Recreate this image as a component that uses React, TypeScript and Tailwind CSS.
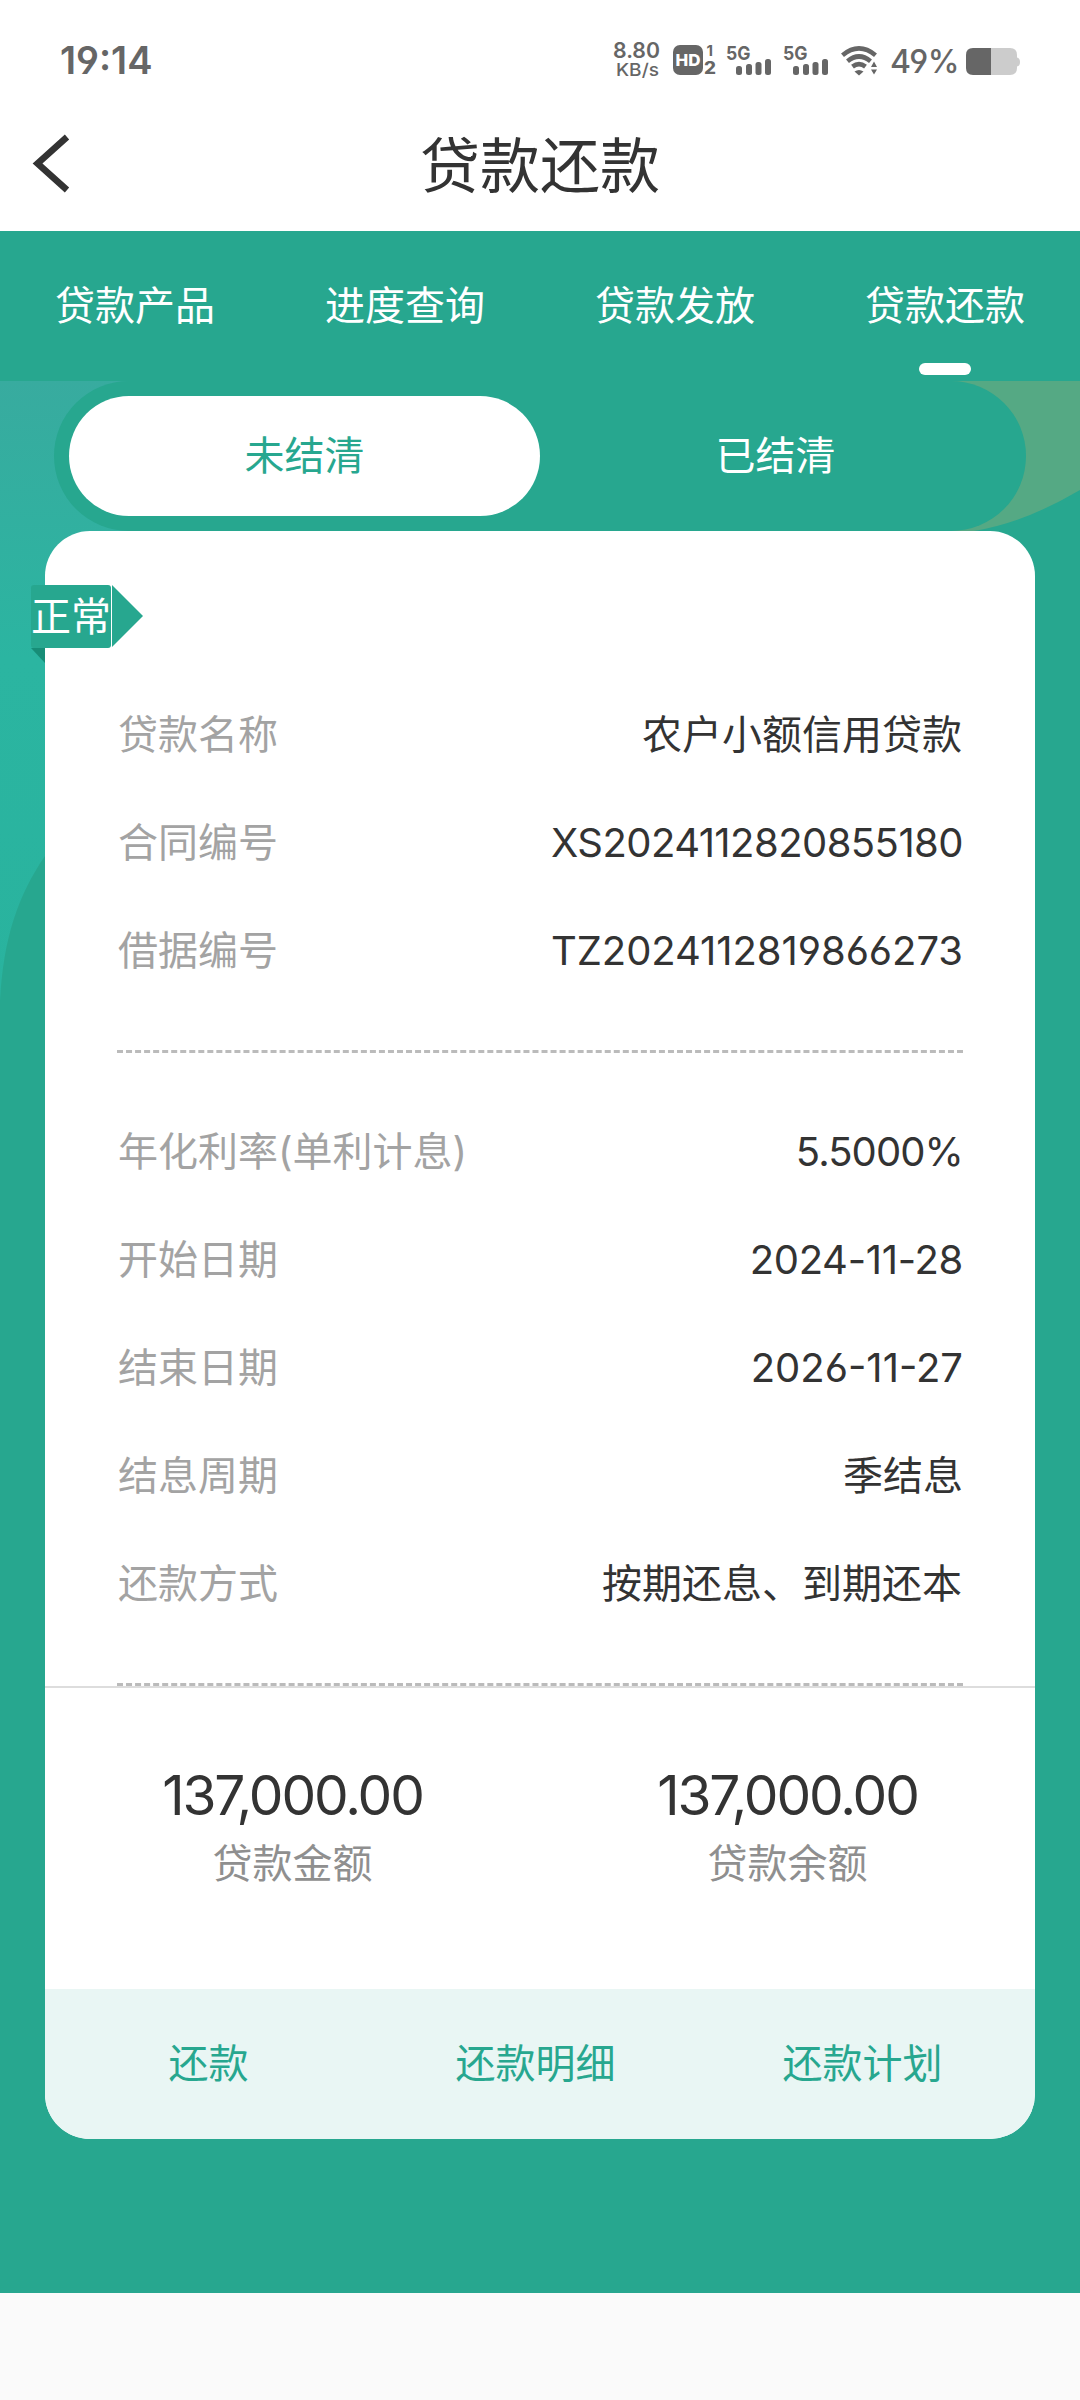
import React from 'react'

const tabs = ['贷款产品', '进度查询', '贷款发放', '贷款还款']

const contractRows = [
  { label: '贷款名称', value: '农户小额信用贷款', valueClass: 'pr-px' },
  { label: '合同编号', value: 'XS2024112820855180', valueClass: 'tracking-[-0.55px]' },
  { label: '借据编号', value: 'TZ2024112819866273', valueClass: 'tracking-[-0.05px]' },
]

const termRows = [
  { label: '年化利率(单利计息)', value: '5.5000%', valueClass: 'tracking-[-0.9px]' },
  { label: '开始日期', value: '2024-11-28', valueClass: 'tracking-[-0.3px]' },
  { label: '结束日期', value: '2026-11-27', valueClass: 'tracking-[0px]' },
  { label: '结息周期', value: '季结息', valueClass: '' },
  { label: '还款方式', value: '按期还息、到期还本', valueClass: 'pr-px' },
]

const amounts = [
  { label: '贷款金额', value: '137,000.00' },
  { label: '贷款余额', value: '137,000.00' },
]

const actions = ['还款', '还款明细', '还款计划']

interface RowProps {
  label: string
  value: string
  valueClass: string
}

function Row({ label, value, valueClass }: RowProps) {
  return (
    <div className="flex h-[108px] items-center justify-between">
      <span className="pl-px text-[#a3a3a3]">{label}</span>
      <span className={`text-[#333] ${valueClass}`}>{value}</span>
    </div>
  )
}

function NetSpeed() {
  return (
    <svg width="50" height="52" viewBox="0 -6 50 52" fill="#666">
      <text x="1" y="18" fontSize="21.500" fontWeight="600" textLength="47" lengthAdjust="spacingAndGlyphs">8.80</text>
      <text x="4" y="36" fontSize="17.500" fontWeight="500" textLength="43" lengthAdjust="spacingAndGlyphs">KB/s</text>
    </svg>
  )
}

function HdBadge() {
  return (
    <svg className="ml-2.5" width="46" height="40" viewBox="0 0 46 40" fill="#666">
      <rect x="1" y="5" width="30" height="30" rx="7" />
      <text x="3.500" y="26" fontSize="16.500" fontWeight="800" fill="#fff" textLength="25" lengthAdjust="spacingAndGlyphs">HD</text>
      <text x="34.500" y="16" fontSize="15" fontWeight="700">1</text>
      <text x="32" y="34" fontSize="17" fontWeight="800" textLength="12" lengthAdjust="spacingAndGlyphs">2</text>
    </svg>
  )
}

function Signal({ className }: { className: string }) {
  return (
    <svg className={className} width="47" height="40" viewBox="0 0 47 40" fill="#666">
      <text x="0" y="19.500" fontSize="19" fontWeight="700" textLength="24.500" lengthAdjust="spacingAndGlyphs">5G</text>
      <rect x="10" y="26" width="6" height="9" rx="2.5" />
      <rect x="20" y="24" width="6" height="11" rx="2.5" />
      <rect x="29.500" y="22" width="6" height="13" rx="2.5" />
      <rect x="39" y="19" width="6" height="16" rx="2.5" />
    </svg>
  )
}

function Wifi() {
  return (
    <svg className="ml-2.5" width="40" height="40" viewBox="0 0 40 40" fill="none" stroke="#666" strokeWidth="4.6">
      <path d="M2.500 15.200Q19 1.600 35.500 15.200" />
      <path d="M7.500 21.200Q19 11.800 30.500 21.200" />
      <path d="M12.500 26.600Q19 21.600 25.500 26.600" />
      <path d="M14.500 31.500Q19 28.500 23.500 31.500L19 35.500Z" fill="#666" stroke="none" />
      <path d="M31 27L34 21.500L37 27ZM31 29.500H37L34 34.500Z" fill="#666" stroke="none" />
    </svg>
  )
}

function Battery() {
  return (
    <svg className="ml-auto" width="54" height="40" viewBox="0 0 54 40">
      <path d="M25 8H44Q51 8 51 15V17.500Q54 18 54 22Q54 26 51 26.500V28Q51 35 44 35H25Z" fill="#ccc" />
      <path d="M7 8H25V35H7Q0 35 0 28V15Q0 8 7 8Z" fill="#666" />
    </svg>
  )
}

function StatusBar() {
  return (
    <div className="flex h-[120px] items-center pr-[60px] pl-[60px] text-[#666]">
      <div className="w-[552px] text-[38px] font-semibold">19:14</div>
      <NetSpeed />
      <HdBadge />
      <Signal className="ml-2" />
      <Signal className="ml-2.5" />
      <Wifi />
      <span className="ml-2.5 w-[68px] pt-1 text-[32px] font-medium tracking-[-0.4px] whitespace-nowrap">49%</span>
      <Battery />
    </div>
  )
}

// soft shapes behind the switcher and along the left edge of the card
function Backdrop() {
  return (
    <svg className="absolute inset-0" width="1080" height="1912" viewBox="0 0 1080 1912">
      <defs>
        <linearGradient id="glow" x1="0" y1="0" x2="0" y2="1">
          <stop offset="0" stopColor="#38ab9f" />
          <stop offset="0.45" stopColor="#2bb5a1" />
          <stop offset="1" stopColor="#29b39e" />
        </linearGradient>
      </defs>
      <path d="M0 0H200V400H45V475C18 514 3 558 0 620Z" fill="url(#glow)" />
      <path d="M900 0H1080V109Q1024 142 974 150H900Z" fill="#55a984" />
    </svg>
  )
}

export default function App() {
  const [activeTab, setActiveTab] = React.useState(3)

  return (
    <div className="min-h-[2400px] w-[1080px] bg-[#fafafa] font-[Inter,'Noto_Sans_CJK_SC',sans-serif] text-[40px] leading-none [font-feature-settings:'cv03','cv04']">
      <header className="h-[231px] bg-white">
        <StatusBar />
        <div className="relative flex h-[92px] items-center justify-center">
          <svg className="absolute top-3.5 left-8" width="40" height="60" viewBox="0 0 40 60" fill="none" stroke="#333" strokeWidth="6.5">
            <path d="M35 3L5.500 29.500L35 56" />
          </svg>
          <h1 className="text-[60px] text-[#333]">贷款还款</h1>
        </div>
      </header>

      <nav className="flex h-[150px] bg-[#27a78f] text-white">
        {tabs.map((tab, i) => (
          <button key={tab} onClick={() => setActiveTab(i)} className="relative flex-1">
            {tab}
            {activeTab === i && (
              <span className="absolute bottom-1.5 left-1/2 h-3 w-[52px] -translate-x-1/2 rounded-full bg-white" />
            )}
          </button>
        ))}
      </nav>

      <main className="relative h-[1912px] bg-[#27a78f]">
        <Backdrop />
        <div className="relative mx-[54px] flex h-[150px] rounded-full bg-[#27a78f] p-[15px]">
          <button className="flex-1 rounded-full bg-white text-[#27a78f]">未结清</button>
          <button className="flex-1 rounded-full text-white">已结清</button>
        </div>

        <section className="relative mx-[45px] h-[1608px] rounded-[45px] bg-white">
          <div className="absolute top-[54px] -left-3.5 flex h-[63px] items-center">
            <span className="flex h-full w-[80px] items-center rounded-[3px] bg-[#27a78f] text-white">正常</span>
            <svg className="ml-px" width="32" height="63" viewBox="0 0 32 63" fill="#27a78f">
              <path d="M0 0L31 31L0 62Z" />
            </svg>
            <svg className="absolute top-[63px] left-0" width="14" height="15" viewBox="0 0 14 15" fill="#178d77">
              <path d="M0 0H14V15Z" />
            </svg>
          </div>

          <div className="px-[72px] pt-[150px]">
            {contractRows.map((row) => (
              <Row key={row.label} {...row} />
            ))}
            <div className="my-[45px] border-t-[3px] border-dashed border-[#bbb]" />
            {termRows.map((row) => (
              <Row key={row.label} {...row} />
            ))}
            <div className="mt-[45px] border-t-[3px] border-dashed border-[#bbb]" />
          </div>

          <div className="flex h-[303px] border-t-2 border-[#ddd] pt-[79px]">
            {amounts.map((item) => (
              <div key={item.label} className="flex flex-1 flex-col items-center">
                <span className="text-[55px] leading-[56px] tracking-[-2.1px] text-[#333]">{item.value}</span>
                <span className="mt-[21px] text-[#8f8f8f]">{item.label}</span>
              </div>
            ))}
          </div>

          <div className="flex h-[150px] rounded-b-[45px] bg-[#e9f6f4] text-[#27a78f]">
            {actions.map((action) => (
              <button key={action} className="w-[327px]">
                {action}
              </button>
            ))}
          </div>
        </section>
      </main>
    </div>
  )
}
